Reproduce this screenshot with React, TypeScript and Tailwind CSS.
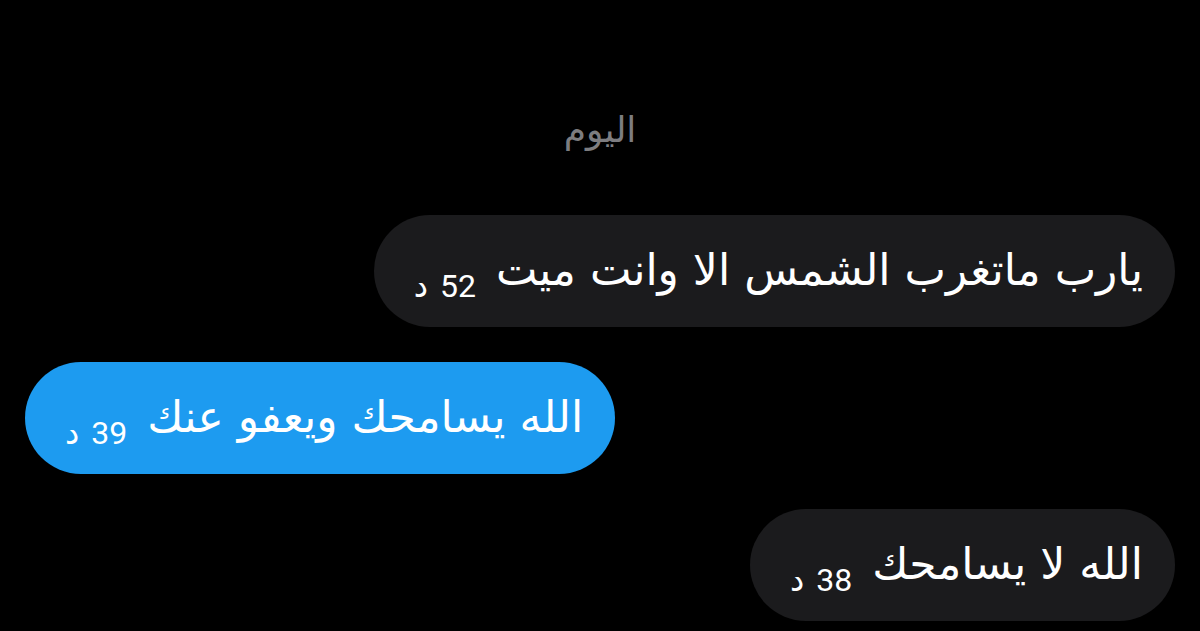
import React from 'react';

const messages = [
  { text: 'يارب ماتغرب الشمس الا وانت ميت', time: '52 د', mine: false },
  { text: 'الله يسامحك ويعفو عنك', time: '39 د', mine: true },
  { text: 'الله لا يسامحك', time: '38 د', mine: false },
];

const App = () => {
  return (
    <div
      dir="rtl"
      className="min-h-[631px] w-[1200px] bg-black px-[25px] pt-[108px] font-['DejaVu_Sans',sans-serif] text-white"
    >
      <div className="mb-[63px] text-center text-[36px] leading-[44px] text-[#7d7d80]">اليوم</div>

      <div className="flex flex-col gap-[35px]">
        {messages.map((m, i) => (
          <div key={i} className={m.mine ? 'flex justify-end' : 'flex justify-start'}>
            <div
              className={
                'flex h-[112px] items-end rounded-full pb-[21px] pl-[40px] pr-[32px] ' +
                (m.mine ? 'bg-[#1d9bf0]' : 'bg-[#1b1b1d]')
              }
            >
              <span className="mb-[8px] text-[44px] leading-[56px]">{m.text}</span>
              <span className="mr-[20px] font-['Roboto','DejaVu_Sans',sans-serif] text-[32px] leading-[40px] [word-spacing:4px]">
                {m.time}
              </span>
            </div>
          </div>
        ))}
      </div>
    </div>
  );
};

export default App;
